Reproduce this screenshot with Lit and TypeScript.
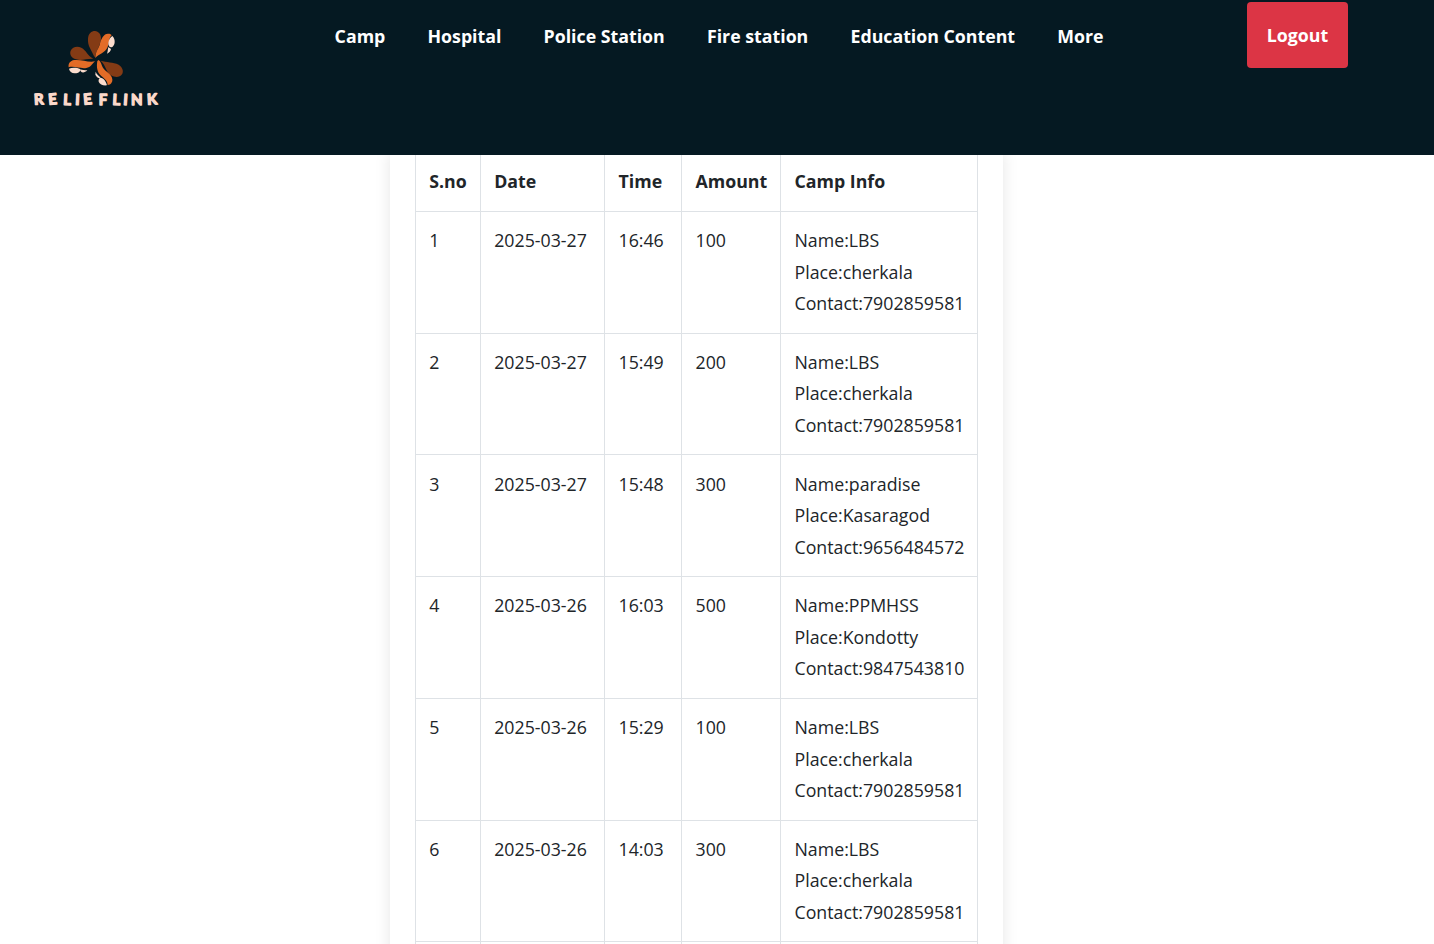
import { LitElement, html, css, svg } from "lit";
import { customElement, property } from "lit/decorators.js";

interface Donation {
  date: string;
  time: string;
  amount: number;
  camp: string;
  place: string;
  contact: string;
}

const LINKS = ["Camp", "Hospital", "Police Station", "Fire station", "Education Content", "More"];

const lbs = { camp: "LBS", place: "cherkala", contact: "7902859581" };

const DONATIONS: Donation[] = [
  { date: "2025-03-27", time: "16:46", amount: 100, ...lbs },
  { date: "2025-03-27", time: "15:49", amount: 200, ...lbs },
  { date: "2025-03-27", time: "15:48", amount: 300, camp: "paradise", place: "Kasaragod", contact: "9656484572" },
  { date: "2025-03-26", time: "16:03", amount: 500, camp: "PPMHSS", place: "Kondotty", contact: "9847543810" },
  { date: "2025-03-26", time: "15:29", amount: 100, ...lbs },
  { date: "2025-03-26", time: "14:03", amount: 300, ...lbs },
];

@customElement("relief-logo")
export class ReliefLogo extends LitElement {
  static styles = css`
    :host { display: block; width: 150px; height: 100px; }
    .logo { display: block; width: 150px; height: 100px; }
    .leaf { fill: #843b15; }
    .petal { fill: #e36c27; }
    .cream { fill: #fbdccd; }
    .word {
      fill: #fbd9cb;
      stroke: #fbd9cb;
      stroke-width: 4;
      stroke-linejoin: round;
      font: 700 45px Lato, "Open Sans", sans-serif;
    }
  `;

  render() {
    return html`<svg class="logo" viewBox="0 0 450 300" role="img" aria-label="Relieflink">
      ${svg`
        <path class="leaf" d="M224 112C215 91 202 77 204 56C205 41 214 33 225 33C236 34 243 43 243 54C243 74 229 90 224 112Z"/>
        <path class="petal" d="M226 114C226 96 233 91 239 75C243 55 252 40 265 41C270 41 274 43 275 46C266 54 268 68 263 81C255 100 237 101 226 114Z"/>
        <path class="cream" d="M277 48C287 57 286 75 277 81C270 85 264 77 265 68C267 59 270 52 277 48ZM265 81C267 84 271 84 273 87C272 94 268 97 261 101C264 94 263 88 265 81Z"/>
        <path class="leaf" d="M220 116C202 115 185 123 168 118C154 114 148 103 152 92C157 81 171 77 184 83C199 91 203 107 220 116Z"/>
        <path class="petal" d="M225 124C216 132 213 142 199 144C181 147 161 137 146 142C144 131 150 122 163 120C186 118 203 128 225 124Z"/>
        <path class="cream" d="M147 146C157 141 172 143 180 147C184 155 172 161 164 160C155 160 148 154 147 146ZM180 148C188 150 194 151 202 151C195 158 187 160 182 154Z"/>
        <path class="leaf" d="M242 122C260 128 279 125 296 134C307 141 312 153 306 163C299 173 285 173 273 166C257 155 257 135 242 122Z"/>
        <path class="petal" d="M232 123C229 141 231 157 244 168C255 177 263 184 263 195C272 195 278 187 277 178C275 161 257 157 248 142C244 134 243 125 236 120Z"/>
        <path class="cream" d="M227 155C230 164 238 168 242 173C238 177 229 171 226 164ZM241 173C251 174 259 185 261 196C250 198 239 193 236 185C235 178 237 175 241 173Z"/>
        <text class="word" x="43 86 129 165 191 236 277 309 333 382" y="254" rotate="-3 -5 3 3 -5 0 3 4 0 -3">RELIEFLINK</text>
      `}
    </svg>`;
  }
}

@customElement("donation-table")
export class DonationTable extends LitElement {
  @property({ attribute: false }) rows: Donation[] = [];

  static styles = css`
    :host { display: block; border-right: 1px solid #dee2e6; }
    .row {
      display: grid;
      grid-template-columns: 65px 124px 77px 99px 197px;
      height: 121.75px;
      box-sizing: border-box;
      border-top: 1px solid #dee2e6;
    }
    .head { height: 58.9px; font-weight: 700; }
    .cell { border-left: 1px solid #dee2e6; padding: 13.2px 0 0 13.2px; white-space: nowrap; }
    .cell:nth-child(n + 3) { padding-left: 13.5px; }
  `;

  render() {
    return html`
      <div class="row head">
        ${["S.no", "Date", "Time", "Amount", "Camp Info"].map((h) => html`<div class="cell">${h}</div>`)}
      </div>
      ${this.rows.map(
        (r, i) => html`<div class="row">
          <div class="cell">${i + 1}</div>
          <div class="cell">${r.date}</div>
          <div class="cell">${r.time}</div>
          <div class="cell">${r.amount}</div>
          <div class="cell">Name:${r.camp}<br />Place:${r.place}<br />Contact:${r.contact}</div>
        </div>`
      )}
      <div class="row">${[0, 1, 2, 3, 4].map(() => html`<div class="cell"></div>`)}</div>
    `;
  }
}

@customElement("app-root")
export class AppRoot extends LitElement {
  static styles = css`
    :host {
      display: flex;
      flex-direction: column;
      height: 944px;
      overflow: hidden;
      background: #fff;
      color: #212529;
      font: 17.75px/31.5px "Open Sans", "Noto Sans", sans-serif;
    }
    .bar {
      flex: none;
      display: flex;
      align-items: flex-start;
      height: 155px;
      box-sizing: border-box;
      background: #051922;
      color: #fff;
      font-weight: 700;
    }
    .brand { margin: 20px 0 0 20px; }
    .links { display: flex; gap: 42.2px; margin: 21px 0 0 164.6px; white-space: nowrap; }
    .logout {
      width: 101px;
      height: 66px;
      margin: 2px 86px 0 auto;
      border-radius: 4px;
      background: #dc3545;
      text-align: center;
      line-height: 66px;
    }
    .view { flex: 1; min-height: 0; overflow: hidden; }
    .card {
      width: 563px;
      margin: -3px 0 0 390px;
      padding: 0 25px;
      background: #fff;
      box-shadow: 0 0 15px rgba(0, 0, 0, 0.1);
    }
  `;

  render() {
    return html`
      <header class="bar">
        <relief-logo class="brand"></relief-logo>
        <nav class="links">${LINKS.map((l) => html`<span>${l}</span>`)}</nav>
        <div class="logout">Logout</div>
      </header>
      <main class="view">
        <div class="card"><donation-table .rows=${DONATIONS}></donation-table></div>
      </main>
    `;
  }
}
